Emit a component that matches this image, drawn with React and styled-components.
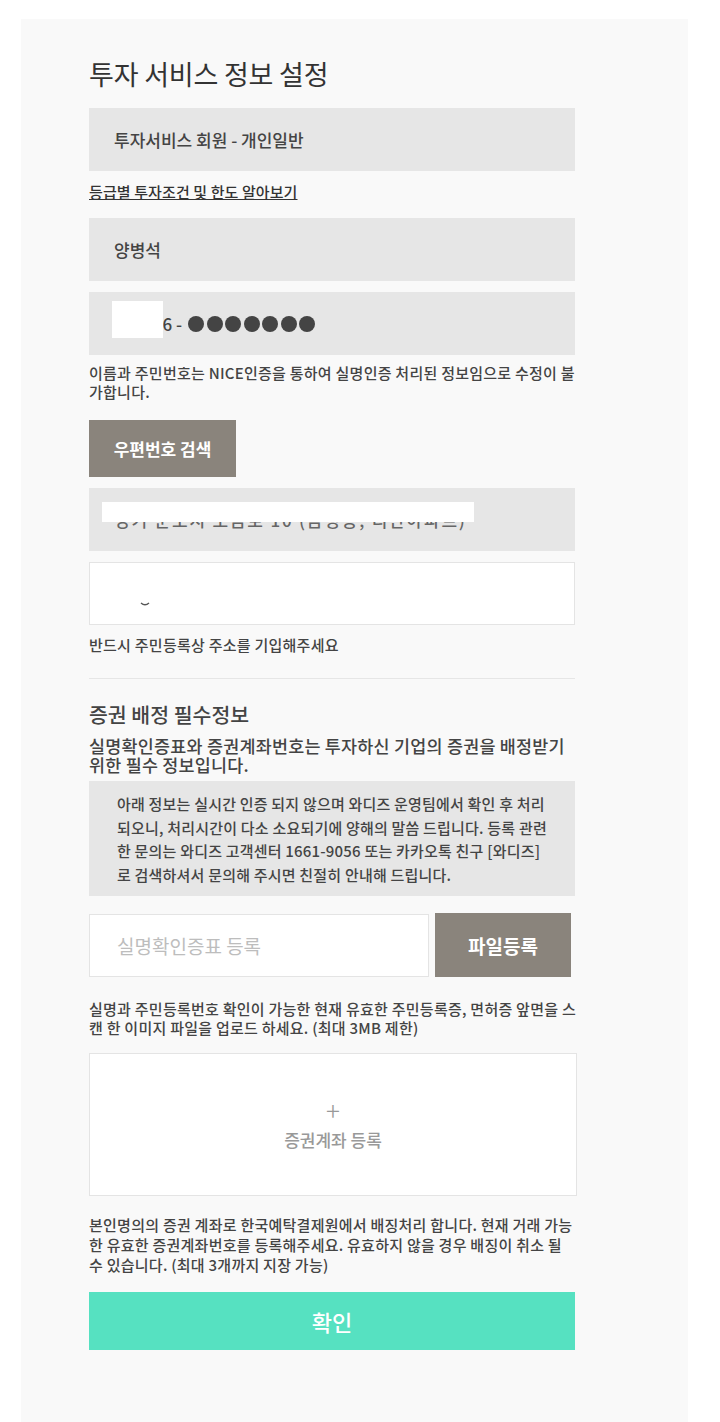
import React from "react";
import styled, { createGlobalStyle } from "styled-components";

const GlobalStyle = createGlobalStyle`
  body {
    margin: 0;
    background: #ffffff;
    font-family: "Noto Sans CJK KR", "Noto Sans", sans-serif;
    color: #333;
  }
`;

function InvestInfo() {
  return (
    <Page>
      <Card>
        <Title>투자 서비스 정보 설정</Title>
        <ReadBox>투자서비스 회원 - 개인일반</ReadBox>
        <GradeLink href="#">등급별 투자조건 및 한도 알아보기</GradeLink>

        <ReadBox $gap={16}>양병석</ReadBox>
        <ReadBox $gap={11}>
          <Masked>
            880316 -
            <Cover $left={-2} $top={-11} $width={51} $height={37} />
          </Masked>
          <Dots>
            {[0, 1, 2, 3, 4, 5, 6].map((i) => (
              <Dot key={i} />
            ))}
          </Dots>
        </ReadBox>
        <Note $gap={8}>
          이름과 주민번호는 NICE인증을 통하여 실명인증 처리된 정보임으로 수정이 불
          <br />
          가합니다.
        </Note>

        <ZipButton>우편번호 검색</ZipButton>
        <ReadBox $gap={11} $muted>
          <Masked $spacing={1.8}>
            경기 군포시 오금로 10 (금정동, 디안아파트)
            <Cover $left={-12} $top={-6} $width={372} $height={20} />
          </Masked>
        </ReadBox>
        <InputBox $gap={11}>
          <Scratch viewBox="0 0 10 5">
            <path d="M1 1 Q5 4.5 9 1" fill="none" stroke="#555" strokeWidth="1.4" />
          </Scratch>
        </InputBox>
        <Note $gap={10}>반드시 주민등록상 주소를 기입해주세요</Note>

        <Divider />

        <SectionTitle>증권 배정 필수정보</SectionTitle>
        <SectionLead>
          실명확인증표와 증권계좌번호는 투자하신 기업의 증권을 배정받기
          <br />
          위한 필수 정보입니다.
        </SectionLead>
        <Notice>
          아래 정보는 실시간 인증 되지 않으며 와디즈 운영팀에서 확인 후 처리
          <br />
          되오니, 처리시간이 다소 소요되기에 양해의 말씀 드립니다. 등록 관련
          <br />
          한 문의는 와디즈 고객센터 1661-9056 또는 카카오톡 친구 [와디즈]
          <br />
          로 검색하셔서 문의해 주시면 친절히 안내해 드립니다.
        </Notice>

        <FileRow>
          <FileInput>실명확인증표 등록</FileInput>
          <FileButton>파일등록</FileButton>
        </FileRow>
        <Note $gap={22}>
          실명과 주민등록번호 확인이 가능한 현재 유효한 주민등록증, 면허증 앞면을 스
          <br />
          캔 한 이미지 파일을 업로드 하세요. (최대 3MB 제한)
        </Note>

        <UploadBox>
          <Plus>+</Plus>
          <UploadLabel>증권계좌 등록</UploadLabel>
        </UploadBox>
        <Note $gap={19} $lh={20}>
          본인명의의 증권 계좌로 한국예탁결제원에서 배징처리 합니다. 현재 거래 가능
          <br />
          한 유효한 증권계좌번호를 등록해주세요. 유효하지 않을 경우 배징이 취소 될
          <br />
          수 있습니다. (최대 3개까지 지장 가능)
        </Note>

        <ConfirmButton>확인</ConfirmButton>
      </Card>
    </Page>
  );
}

const Page = styled.div`
  padding: 19px 0 0 21px;
`;

const Card = styled.div`
  box-sizing: border-box;
  width: 667px;
  min-height: 1403px;
  background: #f9f9f9;
  padding: 40px 113px 60px 68px;
  display: flex;
  flex-direction: column;
  align-items: flex-start;
`;

const Title = styled.h1`
  margin: 0 0 19px;
  font-size: 27px;
  line-height: 30px;
  font-weight: 400;
  color: #333;
  letter-spacing: -0.2px;
`;

const ReadBox = styled.div`
  box-sizing: border-box;
  width: 486px;
  height: 63px;
  margin-top: ${(p) => p.$gap || 0}px;
  padding-left: 25px;
  background: #e6e6e6;
  display: flex;
  align-items: center;
  font-size: 17px;
  line-height: 24px;
  font-weight: 500;
  color: ${(p) => (p.$muted ? "#666" : "#444")};
`;

const GradeLink = styled.a`
  margin-top: 11px;
  font-size: 15px;
  line-height: 20px;
  font-weight: 500;
  color: #333;
  text-decoration: underline;
  letter-spacing: 0.1px;
`;

const Masked = styled.span`
  position: relative;
  white-space: pre;
  letter-spacing: ${(p) => p.$spacing || 0}px;
`;

const Cover = styled.span`
  position: absolute;
  left: ${(p) => p.$left}px;
  top: ${(p) => p.$top}px;
  width: ${(p) => p.$width}px;
  height: ${(p) => p.$height}px;
  background: #ffffff;
`;

const Dots = styled.span`
  display: inline-flex;
  gap: 2.5px;
  margin-left: 6px;
`;

const Dot = styled.span`
  width: 16px;
  height: 16px;
  border-radius: 50%;
  background: #444;
`;

const Note = styled.p`
  margin: ${(p) => p.$gap || 0}px 0 0;
  font-size: 15px;
  line-height: ${(p) => p.$lh || 19}px;
  font-weight: 500;
  color: #444;
  white-space: nowrap;
  letter-spacing: 0.25px;
`;

const ZipButton = styled.button`
  margin-top: 19px;
  width: 147px;
  height: 57px;
  border: none;
  background: #8a847c;
  color: #fff;
  font-family: inherit;
  font-size: 17px;
  font-weight: 700;
  padding: 0;
`;

const InputBox = styled.div`
  box-sizing: border-box;
  width: 486px;
  height: 63px;
  margin-top: ${(p) => p.$gap || 0}px;
  background: #fff;
  border: 1px solid #e4e4e4;
  display: flex;
  align-items: flex-end;
  padding: 0 0 17px 50px;
`;

const Scratch = styled.svg`
  width: 10px;
  height: 5px;
`;

const Divider = styled.hr`
  align-self: stretch;
  margin: 24px 0 0;
  border: none;
  border-top: 1px solid #e6e6e6;
`;

const SectionTitle = styled.h2`
  margin: 23px 0 0;
  font-size: 20.5px;
  line-height: 24px;
  font-weight: 500;
  color: #444;
`;

const SectionLead = styled.p`
  margin: 10px 0 0;
  font-size: 17.4px;
  line-height: 19px;
  font-weight: 500;
  color: #444;
  white-space: nowrap;
  letter-spacing: 0.25px;
`;

const Notice = styled.div`
  box-sizing: border-box;
  width: 486px;
  margin-top: 7px;
  padding: 11px 20px 10px 28px;
  background: #e6e6e6;
  font-size: 15px;
  line-height: 23.5px;
  font-weight: 500;
  color: #444;
  white-space: nowrap;
  letter-spacing: 0.2px;
`;

const FileRow = styled.div`
  margin-top: 18px;
  display: flex;
  gap: 6px;
`;

const FileInput = styled.div`
  box-sizing: border-box;
  width: 340px;
  height: 63px;
  background: #fff;
  border: 1px solid #e4e4e4;
  padding-left: 27px;
  display: flex;
  align-items: center;
  font-size: 19px;
  color: #bdbdbd;
`;

const FileButton = styled.button`
  width: 136px;
  height: 64px;
  margin-top: -1px;
  border: none;
  background: #8a847c;
  color: #fff;
  font-family: inherit;
  font-size: 19px;
  font-weight: 700;
  padding: 0;
`;

const UploadBox = styled.div`
  box-sizing: border-box;
  width: 488px;
  height: 143px;
  margin-top: 16px;
  background: #fff;
  border: 1px solid #e4e4e4;
  display: flex;
  flex-direction: column;
  align-items: center;
  justify-content: center;
  gap: 6px;
  color: #999;
`;

const Plus = styled.span`
  font-size: 26px;
  line-height: 24px;
  font-weight: 300;
`;

const UploadLabel = styled.span`
  font-size: 17px;
  line-height: 24px;
  font-weight: 500;
`;

const ConfirmButton = styled.button`
  margin-top: 17px;
  width: 486px;
  height: 58px;
  border: none;
  background: #56e1c1;
  color: #fff;
  font-family: inherit;
  font-size: 22px;
  font-weight: 500;
  padding: 0;
`;

export default function App() {
  return (
    <>
      <GlobalStyle />
      <InvestInfo />
    </>
  );
}
